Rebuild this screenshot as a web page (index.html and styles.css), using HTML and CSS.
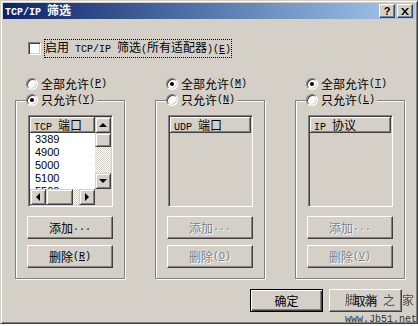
FILE: index.html
```html
<!DOCTYPE html>
<html lang="zh-CN">
<head>
<meta charset="UTF-8" />
<title>TCP/IP 筛选</title>
<link rel="stylesheet" href="styles.css">
</head>
<body>

<div class="window">
  <div class="titlebar">
    <span class="title"><span class="m">TCP/IP </span>筛选</span>
    <div class="title-buttons">
      <button class="tbtn">?</button>
      <button class="tbtn">
        <svg width="8" height="7" viewBox="0 0 8 7"><path d="M0 0h2l2 2.4L6 0h2L5 3.5 8 7H6L4 4.6 2 7H0l3-3.5z" fill="#000"/></svg>
      </button>
    </div>
  </div>

  <div class="content">
    <div class="check-row">
      <span class="checkbox"></span>
      <span class="focus">启用<span class="m"> TCP/IP </span>筛选<span class="m">(</span>所有适配器<span class="m">)(<u>E</u>)</span></span>
    </div>

    <div class="columns">
      <div class="column">
        <div class="radio-row"><span class="radio"></span>全部允许<span class="m">(<u>P</u>)</span></div>
        <div class="group">
          <div class="legend"><span class="radio checked"></span>只允许<span class="m">(<u>Y</u>)</span></div>
          <div class="listview">
            <div class="lv-main">
              <div class="lv-header"><span class="m">TCP </span>端口</div>
              <div class="lv-row">3389</div>
              <div class="lv-row">4900</div>
              <div class="lv-row">5000</div>
              <div class="lv-row">5100</div>
              <div class="lv-row">5500</div>
            </div>
            <div class="vscroll">
              <div class="sb-btn"><span class="arr up"></span></div>
              <div class="sb-thumb v"></div>
              <div class="sb-track"></div>
              <div class="sb-btn"><span class="arr down"></span></div>
            </div>
            <div class="hscroll">
              <div class="sb-btn"><span class="arr left"></span></div>
              <div class="sb-thumb h"></div>
              <div class="sb-track"></div>
              <div class="sb-btn"><span class="arr right"></span></div>
            </div>
            <div class="sb-corner"></div>
          </div>
          <button class="btn first">添加<span class="m">...</span></button>
          <button class="btn">删除<span class="m">(<u>R</u>)</span></button>
        </div>
      </div>

      <div class="column">
        <div class="radio-row"><span class="radio checked"></span>全部允许<span class="m">(<u>M</u>)</span></div>
        <div class="group">
          <div class="legend"><span class="radio"></span>只允许<span class="m">(<u>N</u>)</span></div>
          <div class="listview off">
            <div class="lv-header"><span class="m">UDP </span>端口</div>
          </div>
          <button class="btn first" disabled>添加<span class="m">...</span></button>
          <button class="btn" disabled>删除<span class="m">(<u>O</u>)</span></button>
        </div>
      </div>

      <div class="column">
        <div class="radio-row"><span class="radio checked"></span>全部允许<span class="m">(<u>T</u>)</span></div>
        <div class="group">
          <div class="legend"><span class="radio"></span>只允许<span class="m">(<u>L</u>)</span></div>
          <div class="listview off">
            <div class="lv-header"><span class="m">IP </span>协议</div>
          </div>
          <button class="btn first" disabled>添加<span class="m">...</span></button>
          <button class="btn" disabled>删除<span class="m">(<u>V</u>)</span></button>
        </div>
      </div>
    </div>

    <div class="actions">
      <button class="btn default">确定</button>
      <button class="btn">取消</button>
    </div>
  </div>

  <div class="watermark">脚本之家</div>
  <div class="watermark-url">www.Jb51.net</div>
</div>

</body>
</html>
```

FILE: styles.css
```css
body {
  margin: 0;
  background: #fff;
  font-family: "Noto Sans CJK SC", sans-serif;
  font-size: 12px;
  line-height: 16px;
  color: #000;
}
.m {
  font-family: "Liberation Mono", monospace;
  font-size: 10px;
  white-space: pre;
}
u {
  text-underline-offset: 1px;
}
.window {
  position: relative;
  width: 418px;
  height: 324px;
  box-sizing: border-box;
  background: #d4d0c8;
  border: 1px solid;
  border-color: #d4d0c8 #404040 #404040 #d4d0c8;
  box-shadow: inset 1px 1px #fff, inset -1px -1px #808080;
  padding: 2px;
}
.titlebar {
  height: 16px;
  display: flex;
  align-items: center;
  justify-content: space-between;
  padding: 0 0 0 2px;
  background: linear-gradient(to right, #0a246a, #a6caf0);
}
.title {
  color: #fff;
  font-weight: bold;
}
.title-buttons {
  display: flex;
  gap: 2px;
  margin-right: 2px;
}
.tbtn {
  width: 16px;
  height: 14px;
  padding: 0;
  display: flex;
  align-items: center;
  justify-content: center;
  background: #d4d0c8;
  border: 1px solid;
  border-color: #fff #404040 #404040 #fff;
  box-shadow: inset -1px -1px #808080;
  font: bold 11px "Liberation Sans", sans-serif;
  color: #000;
}
.content {
  padding: 21px 11px 0 12px;
}
.check-row {
  display: flex;
  align-items: center;
  height: 16px;
  margin-left: 13px;
}
.checkbox {
  width: 13px;
  height: 13px;
  box-sizing: border-box;
  background: #fff;
  border: 1px solid;
  border-color: #808080 #fff #fff #808080;
  box-shadow: inset 1px 1px #404040, inset -1px -1px #d4d0c8;
  margin-right: 3px;
}
.focus {
  padding: 0 1px;
  outline: 1px dotted #000;
  outline-offset: -1px;
}
.columns {
  display: grid;
  grid-template-columns: 110px 110px 110px;
  gap: 30px;
  margin-top: 20px;
}
.radio-row,
.legend {
  display: flex;
  align-items: center;
  height: 16px;
}
.radio-row {
  padding-left: 11px;
}
.radio {
  position: relative;
  width: 12px;
  height: 12px;
  box-sizing: border-box;
  border-radius: 50%;
  background: #fff;
  border: 1px solid;
  border-color: #808080 #fff #fff #808080;
  box-shadow: inset 1px 1px #404040, inset -1px -1px #d4d0c8;
  margin-right: 3px;
}
.radio.checked::after {
  content: "";
  position: absolute;
  left: 3px;
  top: 3px;
  width: 4px;
  height: 4px;
  border-radius: 50%;
  background: #000;
}
.group {
  margin-top: 8px;
  border: 1px solid #808080;
  box-shadow: inset 1px 1px #fff, 1px 1px #fff;
  padding: 0 11px 10px 12px;
}
.legend {
  width: fit-content;
  margin: -9px 0 0 -2px;
  padding-right: 2px;
  background: #d4d0c8;
}
.listview {
  margin-top: 7px;
  width: 85px;
  height: 92px;
  box-sizing: border-box;
  padding: 1px;
  border: 1px solid;
  border-color: #808080 #fff #fff #808080;
  box-shadow: inset 1px 1px #404040, inset -1px -1px #d4d0c8;
  background: #fff;
  display: grid;
  grid-template-columns: 1fr 16px;
  grid-template-rows: 1fr 16px;
}
.listview.off {
  display: block;
  background: #d4d0c8;
}
.lv-main {
  overflow: hidden;
  min-height: 0;
}
.lv-header {
  height: 16px;
  box-sizing: border-box;
  padding-left: 4px;
  line-height: 15px;
  background: #d4d0c8;
  border-right: 1px solid #404040;
  border-bottom: 1px solid #404040;
  box-shadow: inset 1px 1px #fff, inset -1px -1px #808080;
}
.lv-row {
  padding-left: 5px;
  font-family: "Liberation Sans", sans-serif;
  font-size: 11px;
  line-height: 13px;
}
.vscroll,
.hscroll {
  display: flex;
}
.vscroll {
  flex-direction: column;
}
.sb-btn,
.sb-thumb {
  box-sizing: border-box;
  background: #d4d0c8;
  border: 1px solid;
  border-color: #d4d0c8 #404040 #404040 #d4d0c8;
  box-shadow: inset 1px 1px #fff, inset -1px -1px #808080;
}
.sb-btn {
  width: 16px;
  height: 16px;
  display: flex;
  align-items: center;
  justify-content: center;
}
.sb-thumb.v {
  height: 14px;
}
.sb-thumb.h {
  width: 27px;
}
.sb-track {
  flex: 1;
  background: repeating-conic-gradient(#fff 0 25%, #d4d0c8 0 50%) 0 0 / 2px 2px;
}
.sb-corner {
  background: #d4d0c8;
}
.arr {
  width: 0;
  height: 0;
  border: 4px solid transparent;
}
.arr.up { border-top-width: 0; border-bottom-color: #000; }
.arr.down { border-bottom-width: 0; border-top-color: #000; }
.arr.left { border-left-width: 0; border-right-color: #000; }
.arr.right { border-right-width: 0; border-left-color: #000; }
.btn {
  display: flex;
  align-items: center;
  justify-content: center;
  width: 86px;
  height: 23px;
  margin: 6px 0 0 -1px;
  padding: 0;
  box-sizing: border-box;
  background: #d4d0c8;
  border: 1px solid;
  border-color: #fff #404040 #404040 #fff;
  box-shadow: inset -1px -1px #808080;
  font: inherit;
  color: #000;
}
.btn.first {
  margin-top: 9px;
}
.btn:disabled {
  color: #808080;
  text-shadow: 1px 1px #fff;
}
.actions {
  display: flex;
  justify-content: flex-end;
  gap: 6px;
  margin: 10px 2px 0 0;
}
.actions .btn {
  width: 73px;
  margin: 0;
}
.btn.default {
  border-color: #000;
  box-shadow: inset 1px 1px #fff, inset -1px -1px #404040, inset -2px -2px #808080;
}
.watermark {
  position: absolute;
  left: 344px;
  top: 291px;
  font-size: 12px;
  letter-spacing: 7px;
  color: #3c2830;
  opacity: 0.85;
  white-space: nowrap;
}
.watermark-url {
  position: absolute;
  left: 344px;
  top: 311px;
  font-family: "Liberation Mono", monospace;
  font-size: 10px;
  color: #333;
  white-space: nowrap;
}
```
